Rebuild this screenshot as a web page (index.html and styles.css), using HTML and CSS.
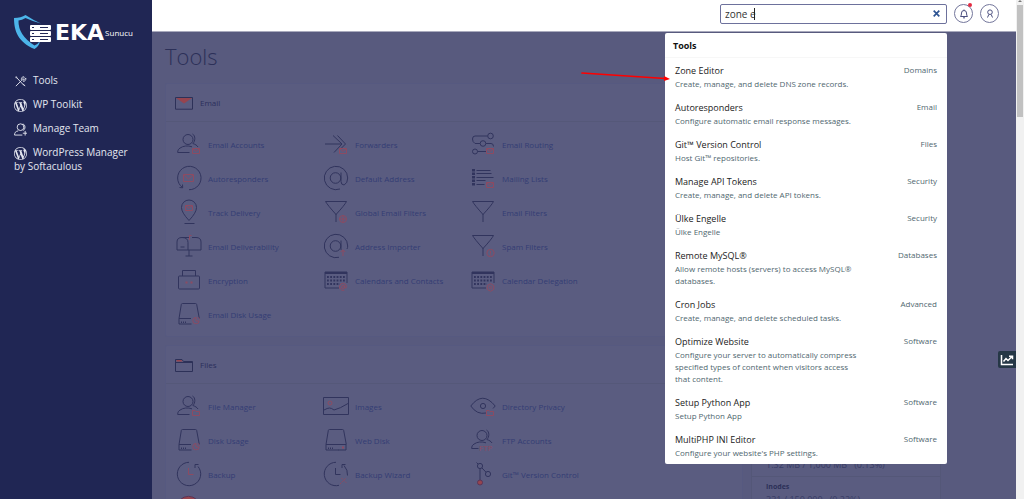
FILE: index.html
```html
<!DOCTYPE html>
<html lang="en">
<head>
<meta charset="utf-8">
<title>Tools</title>
<link rel="stylesheet" href="styles.css">
</head>
<body>
<svg class="sprite" aria-hidden="true">
  <symbol id="mail-badge" viewBox="0 0 8 6"><path d="M.5.5h7v5h-7zM.8.8 4 3.400 7.200.8"/></symbol>
  <symbol id="folder-badge" viewBox="0 0 8 6"><path d="M.5.5h2.500l.8 1h3.700v4h-7z"/></symbol>
  <symbol id="person" viewBox="0 0 26 26"><circle cx="12" cy="8.500" r="5"/><path d="M16.500 3c3 1.500 3 7 .4 9.500 2.500 1 4 1.700 5.100 3.500M16 15.800c-4-1.500-9-1-12 1.300-1.500 1-2.300 2-2.300 4.400H13.500"/></symbol>
  <symbol id="disk" viewBox="0 0 26 26"><path d="M6.500 2.500h13q1 0 1.200 1l2.600 14M3 17.500 5.300 3.500q.2-1 1.200-1M3 17.500V23H15.500M3 17.500H15M5.500 22v-1.500M7.500 22v-1.500M9.500 22v-1.500"/></symbol>
  <symbol id="pie-badge" viewBox="0 0 8 8"><path d="M4 1A3.200 3.200 0 1 0 7.200 4.500H4zM5.500.7q1.700.7 1.800 2.300"/></symbol>
  <symbol id="filter" viewBox="0 0 26 26"><path d="M2.500 2.500h21q-1.700 3.500-10.500 13Q4.500 6 2.500 2.500zM13 15v8"/></symbol>
  <symbol id="calendar" viewBox="0 0 26 26"><path d="M16 21H2V5h22v11"/><path d="M2 6h22" stroke-width="2"/><path d="M4 10h18M4 13.500h18M4 17h13" stroke-width="1.800" stroke-dasharray="1.800 1.400"/></symbol>
  <symbol id="wp" viewBox="0 0 20 20"><path d="M20 10c0-5.510-4.490-10-10-10C4.480 0 0 4.490 0 10c0 5.520 4.480 10 10 10 5.510 0 10-4.480 10-10zM7.780 15.370L4.370 6.220c.55-.02 1.170-.08 1.170-.08.5-.06.44-1.130-.06-1.110 0 0-1.450.11-2.370.11-.18 0-.37 0-.58-.01C4.120 2.690 6.870 1.110 10 1.110c2.330 0 4.450.87 6.050 2.340-.68-.11-1.650.39-1.650 1.580 0 .74.45 1.360.9 2.100.35.61.55 1.360.55 2.460 0 1.490-1.400 5-1.400 5l-3.030-8.370c.54-.02.82-.17.82-.17.5-.05.44-1.250-.06-1.220 0 0-1.440.12-2.380.12-.87 0-2.330-.12-2.330-.12-.5-.03-.56 1.200-.06 1.220l.92.08 1.260 3.410zM17.410 10c.24-.64.74-1.870.43-4.250.7 1.290 1.050 2.710 1.050 4.250 0 3.290-1.730 6.240-4.400 7.780.97-2.590 1.940-5.200 2.920-7.780zM6.100 18.090C3.120 16.650 1.110 13.530 1.110 10c0-1.300.23-2.480.72-3.590C3.250 10.300 4.670 14.200 6.100 18.090zm4.030-6.630l2.580 6.980c-.86.29-1.760.45-2.710.45-.79 0-1.570-.11-2.290-.33.81-2.380 1.620-4.740 2.420-7.100z"/></symbol>
</svg>
<div class="app">
  <aside class="sidebar">
    <a class="brand" href="#">
      <svg class="shield" viewBox="0 0 38 36" aria-hidden="true">
        <path fill="#4cb5ea" d="M0 3Q7 3 11.500 0 19 5 27 8.500 19 6.500 11.500 3 8 5 4.500 5.500 4 20 20.500 30.500 24 29 26 26 25 31.500 20.500 34C4 27 0 16 0 3z"/>
        <g fill="#fff"><rect x="16" y="10" width="21" height="5" rx="1"/><rect x="16" y="16" width="21" height="5" rx="1"/><rect x="16" y="22" width="21" height="5" rx="1"/></g>
        <path stroke="#232957" d="M18 12.500h2M26 12.500h8M18 18.500h2M26 18.500h8M18 24.500h2M26 24.500h8"/>
      </svg>
      <span class="brand-name">EKA</span><span class="brand-sub">Sunucu</span>
    </a>
    <nav class="nav">
      <a href="#"><svg class="nav-icon line" viewBox="0 0 14 14"><path d="m3 3 8 8.500M2 2l1.500.5M2 2l.5 1.500M12 12l-2.200-2.500M2 12l6-6M11.500 2 9.500 4v1.200h1.200l2-2c.5 2-1 4-3 3.500M9 6.500C7 5 8 2 10.500 1.700" /></svg>Tools</a>
      <a href="#"><svg class="nav-icon solid" viewBox="0 0 20 20"><use href="#wp"/></svg>WP Toolkit</a>
      <a href="#"><svg class="nav-icon line" viewBox="0 0 14 14"><circle cx="7" cy="4.500" r="3.600"/><path d="M9.500 1c3 1 3 5.500.5 7M4.500 8.500C1.500 9 .6 10.500.6 13H9M12 8.500v5M9.500 11h4.500"/></svg>Manage Team</a>
      <a href="#"><svg class="nav-icon solid" viewBox="0 0 20 20"><use href="#wp"/></svg>WordPress Manager by Softaculous</a>
    </nav>
  </aside>

  <div class="page">
    <header class="topbar">
      <form class="search" role="search">
        <label class="field"><span class="hidden">Search Tools</span><input type="text" value="zone e"><span class="caret"></span></label>
        <button class="clear" type="button" aria-label="Clear"><svg viewBox="0 0 8 8"><path d="m1.500 1.500 5 5m0-5-5 5"/></svg></button>
        <section class="results">
          <h2>Tools</h2>
          <a href="#"><strong>Zone Editor</strong><em>Domains</em><span>Create, manage, and delete DNS zone records.</span></a>
          <a href="#"><strong>Autoresponders</strong><em>Email</em><span>Configure automatic email response messages.</span></a>
          <a href="#"><strong>Git™ Version Control</strong><em>Files</em><span>Host Git™ repositories.</span></a>
          <a href="#"><strong>Manage API Tokens</strong><em>Security</em><span>Create, manage, and delete API tokens.</span></a>
          <a href="#"><strong>Ülke Engelle</strong><em>Security</em><span>Ülke Engelle</span></a>
          <a href="#"><strong>Remote MySQL®</strong><em>Databases</em><span>Allow remote hosts (servers) to access MySQL® databases.</span></a>
          <a href="#"><strong>Cron Jobs</strong><em>Advanced</em><span>Create, manage, and delete scheduled tasks.</span></a>
          <a href="#"><strong>Optimize Website</strong><em>Software</em><span>Configure your server to automatically compress specified types of content when visitors access that content.</span></a>
          <a href="#"><strong>Setup Python App</strong><em>Software</em><span>Setup Python App</span></a>
          <a href="#"><strong>MultiPHP INI Editor</strong><em>Software</em><span>Configure your website's PHP settings.</span></a>
          <svg class="pointer" viewBox="0 0 90 12" aria-hidden="true"><path d="M1 3 84 8.500" stroke="#f00" stroke-width="1.700" stroke-linecap="round"/><path d="m83 6 6 3-6 2z" fill="#f00"/></svg>
        </section>
      </form>
      <button class="round" type="button" aria-label="Notifications"><svg viewBox="0 0 12 12"><path d="M2.500 8.500q1-1 1-3.500 0-2.500 2.500-2.500T8.500 5q0 2.500 1 3.500zM5 9.500q1 1.300 2 0M6 1.500v1"/></svg><i class="dot"></i></button>
      <button class="round" type="button" aria-label="Account"><svg viewBox="0 0 12 12"><circle cx="6" cy="4.200" r="2.300"/><path d="M4.800 6.500 3.500 9.500M7.200 6.500l1.300 3"/></svg></button>
    </header>

    <main class="content">
      <h1>Tools</h1>
      <div class="columns">
        <div class="panels">
          <section class="panel">
            <h2><svg class="head-icon" viewBox="0 0 18 14"><path d="M.5 1.500h17v11.700H.5z"/><path class="fill" d="M1 2h16L9 7.500z"/></svg>Email</h2>
            <div class="tools">
              <a href="#"><svg viewBox="0 0 26 26"><use href="#person"/><use class="red" href="#mail-badge" x="16" y="17" width="8" height="6"/></svg>Email Accounts</a>
              <a href="#"><svg viewBox="0 0 26 26"><path d="M2 13h17M10 4.500l9 8.500-8 8.500M14.500 4.500l8 8.500-4 4"/><use class="red" href="#mail-badge" x="16" y="17" width="8" height="6"/></svg>Forwarders</a>
              <a href="#"><svg viewBox="0 0 26 26"><circle cx="20.500" cy="5" r="2.800"/><circle cx="13" cy="12.500" r="2.800"/><circle cx="5" cy="20.500" r="2.500"/><path d="M17.500 5H5Q2.500 5 2.500 8t2.500 4.500h5M16 12.500h5q2.500 0 2.500 3M7.500 20.500H16"/><use class="red" href="#mail-badge" x="16" y="17" width="8" height="6"/></svg>Email Routing</a>
              <a href="#"><svg viewBox="0 0 26 26"><path d="M6.500 22.500A11.700 11.700 0 1 1 13 24.700M3.500 22.500l3.200.3-.2-3.300"/><path class="red" d="M7.500 9.500h10v7h-10zM8 10l4.500 4L17 10"/></svg>Autoresponders</a>
              <a href="#"><svg viewBox="0 0 26 26"><circle cx="12.500" cy="13" r="5.300"/><path d="M18 7.500v9q0 3.500 3.200 3.500 3.500-2 3.500-7A11.700 11.700 0 1 0 17 24"/></svg>Default Address</a>
              <a href="#"><svg viewBox="0 0 26 26"><path d="M6.500 5.500h14M6.500 8.500h15M6.500 12.500h17M6.500 15.500h9M6.500 19.500h8"/><path d="M3.500 4v17" stroke-width="3" stroke-dasharray="2.500 1"/><use class="red" href="#mail-badge" x="16" y="17" width="8" height="6"/></svg>Mailing Lists</a>
              <a href="#"><svg viewBox="0 0 26 26"><path d="M13 21.500Q5.500 13.500 5.500 8.500a7.500 7.500 0 0 1 15 0q0 5-7.500 13zM8.500 24.500h10"/><use class="red" href="#mail-badge" x="9" y="6" width="8" height="6"/></svg>Track Delivery</a>
              <a href="#"><svg viewBox="0 0 26 26"><use href="#filter"/><g class="red"><circle cx="20" cy="20" r="3.500"/><path d="M16.500 20h7M20 16.500v7"/></g></svg>Global Email Filters</a>
              <a href="#"><svg viewBox="0 0 26 26"><use href="#filter"/></svg>Email Filters</a>
              <a href="#"><svg viewBox="0 0 26 26"><path d="M12 17H1V9q0-4.500 5-4.500 6 0 6 5V17h13V9q0-4.500-5-4.500h-4M6 4.500h7M13 17v6M9.500 23h7M4.500 14h4"/><path class="red" d="M13.500 7V2.500h2"/></svg>Email Deliverability</a>
              <a href="#"><svg viewBox="0 0 26 26"><circle cx="12.500" cy="13" r="5.300"/><path d="M18 7.500V17M24 16q.7-1.500.7-3A11.700 11.700 0 1 0 16 24.300"/><path class="red" d="M20 23v-6M17.800 19l2.200-2.200 2.200 2.200"/></svg>Address Importer</a>
              <a href="#"><svg viewBox="0 0 26 26"><use href="#filter"/><g class="red"><circle cx="20.500" cy="20" r="3.700"/><path d="M20.500 18v2.500M20.500 21.300v1"/></g></svg>Spam Filters</a>
              <a href="#"><svg viewBox="0 0 26 26"><rect x="2.500" y="9" width="21" height="13" rx="1"/><path d="M6.500 9V3.500h13V9"/><path class="red" stroke-width="2" d="M9.500 15.500h2M14.500 15.500h2"/></svg>Encryption</a>
              <a href="#"><svg viewBox="0 0 26 26"><use href="#calendar"/><g class="red"><circle cx="20" cy="20" r="1.500"/><path d="M21.500 18.500v2.500q2 .5 2-1.500a3.500 3.500 0 1 0-2 3.500"/></g></svg>Calendars and Contacts</a>
              <a href="#"><svg viewBox="0 0 26 26"><use href="#calendar"/><g class="red"><circle cx="20.500" cy="20.500" r="1.200"/><path d="m20.500 16.700 3.300 1.900v3.800l-3.300 1.900-3.300-1.900v-3.800z"/></g></svg>Calendar Delegation</a>
              <a href="#"><svg viewBox="0 0 26 26"><use href="#disk"/><use class="red" href="#pie-badge" x="16" y="15.500" width="8" height="8"/></svg>Email Disk Usage</a>
            </div>
          </section>
          <section class="panel">
            <h2><svg class="head-icon" viewBox="0 0 18 14"><path d="M.5 13.500v-12H7l1.500 2h9v10zM.5 4.500h17"/><path class="fill" d="M1.500 2h5l1 1.500h-6z"/></svg>Files</h2>
            <div class="tools">
              <a href="#"><svg viewBox="0 0 26 26"><use href="#person"/><use class="red" href="#folder-badge" x="16" y="17" width="8" height="6"/></svg>File Manager</a>
              <a href="#"><svg viewBox="0 0 26 26"><path d="M.5 4.500h25v17H.5zM1 17q3.500-2 5.500-2t4.500 2q6-1.500 14-6.500"/><circle class="red" cx="7" cy="10" r="2"/></svg>Images</a>
              <a href="#"><svg viewBox="0 0 26 26"><path d="M16 20Q7 22 .8 13q11.700-15.500 24.400 0L23 15.500"/><circle cx="13" cy="13" r="2.600"/><use class="red" href="#folder-badge" x="16" y="17" width="8" height="6"/></svg>Directory Privacy</a>
              <a href="#"><svg viewBox="0 0 26 26"><use href="#disk"/><use class="red" href="#pie-badge" x="16" y="15.500" width="8" height="8"/></svg>Disk Usage</a>
              <a href="#"><svg viewBox="0 0 26 26"><use href="#disk"/><path d="M15 17.500h8V23h-8"/><path class="red" stroke-width="2" d="M19 20.500h2"/></svg>Web Disk</a>
              <a href="#"><svg viewBox="0 0 26 26"><circle cx="12" cy="8.500" r="5"/><path d="M16.500 3c3 1.500 3 7 .4 9.500 2.500 1 4 1.700 5.100 3.500M16 15.800c-4-1.500-9-1-12 1.300-1.500 1-2.300 2-2.300 4.400H8.500"/><text class="ftp" x="9" y="24">FTP</text></svg>FTP Accounts</a>
              <a href="#"><svg viewBox="0 0 26 26"><path d="M13 1.300A11.700 11.700 0 1 0 22 5.500M19 7V3.500h3.500"/><path class="red" d="M12.500 7v6.500h5"/></svg>Backup</a>
              <a href="#"><svg viewBox="0 0 26 26"><path d="M13 1.300A11.700 11.700 0 1 0 16 24.300M24.500 14.500Q25 9 21 4.500M19 7V3.500h3.500M12.500 7v6.500h5"/><path class="red" stroke-dasharray="2 1" d="m17 23 6-6M18.500 17l5 5"/></svg>Backup Wizard</a>
              <a href="#"><svg viewBox="0 0 26 26"><circle cx="10" cy="5" r="2.600"/><circle cx="18" cy="13" r="2.600"/><path d="M10 7.500V19M12 7l4 4.200M6.500 1.500l1.500 1.500"/><circle class="fill" cx="10" cy="21.500" r="2.500"/></svg>Git™ Version Control</a>
              <a href="#" aria-label="Git"><svg viewBox="0 0 26 26"><circle class="fill" cx="12.500" cy="13" r="11.700"/></svg></a>
            </div>
          </section>
        </div>
        <aside class="stats">
          <div class="stat"><span>1.32 MB / 1,000 MB &nbsp; (0.13%)</span></div>
          <div class="stat"><b>Inodes</b><span>331 / 150,000 &nbsp; (0.22%)</span></div>
        </aside>
      </div>
    </main>
    <button class="chart" type="button" aria-label="Analytics"><svg viewBox="0 0 14 12"><path d="M1.500 1v9.500H13M3.500 7.500l2.500-3L8 6.500l4-4M9 2.200h3.500v3"/></svg></button>
  </div>
  <div class="scrollbar" aria-hidden="true"><i class="up"></i><i class="thumb"></i><i class="down"></i></div>
</div>
</body>
</html>
```
FILE: styles.css
```css
* { box-sizing: border-box; }
body { margin: 0; font-family: "Open Sans", "Noto Sans", sans-serif; font-size: 8px; }
a { color: inherit; text-decoration: none; }
h1, h2 { margin: 0; font-weight: 400; }
svg { display: block; flex: none; fill: none; }
button { padding: 0; font: inherit; background: none; border: 0; }
.sprite { position: absolute; width: 0; height: 0; }
.hidden { position: absolute; width: 1px; height: 1px; overflow: hidden; clip-path: inset(50%); }

.app { display: grid; grid-template-columns: 152px 1fr 8px; height: 100vh; overflow: hidden; background: #585a7e; }

.sidebar { padding: 15px 14px; color: #e4e6f0; background: #202654; }
.brand { display: flex; align-items: center; color: #fff; }
.shield { width: 38px; height: 36px; }
.brand-name { margin: 0 1px 0 3px; font: 700 22px/36px "DejaVu Sans", sans-serif; }
.brand-sub { font-size: 8px; line-height: 34px; }
.nav { display: grid; gap: 10px; margin-top: 22px; font-size: 10px; line-height: 14px; }
.nav-icon { display: inline-block; width: 13px; height: 13px; margin: -1px 6px -1px 0; vertical-align: middle; }
.line { stroke: currentColor; stroke-width: 1; }
.solid { fill: currentColor; }

.page { position: relative; min-width: 0; }
.topbar { display: flex; align-items: center; justify-content: flex-end; gap: 7px; height: 32px; padding: 0 17px 4px 0; background: #fff; border-bottom: 1px solid #a9aabd; }
.search { position: relative; display: flex; align-items: center; width: 227px; height: 20px; border: 1px solid #6d719c; border-radius: 2px; }
.field { position: relative; flex: 1; }
.field input { display: block; width: 100%; height: 18px; padding: 0 4px; font: 10px/18px "Open Sans", sans-serif; color: #333; background: none; border: 0; outline: 0; }
.caret { position: absolute; top: 3px; left: 33px; width: 1px; height: 12px; background: #222; }
.clear { margin-right: 5px; }
.clear svg { width: 9px; height: 9px; stroke: #2d5493; stroke-width: 1.500; }
.round { position: relative; display: grid; place-items: center; width: 19px; height: 19px; border: 1px solid #74779c; border-radius: 50%; }
.round svg { width: 12px; height: 12px; stroke: #4c5080; }
.dot { position: absolute; top: -2px; right: 0; width: 4px; height: 4px; background: #e32b41; border-radius: 50%; }

.results { position: absolute; z-index: 2; top: 28px; right: -1px; width: 282px; color: #222; background: #fff; border-radius: 2px; }
.results h2 { padding: 6px 8px 4px; margin-bottom: 1px; font-size: 9px; line-height: 14px; font-weight: 700; color: #111; border-bottom: 1px solid #f7f7f7; }
.results a { display: grid; grid-template-columns: 1fr auto; row-gap: 1px; padding: 5px 10px 6px; }
.results strong { font-size: 9px; line-height: 13px; font-weight: 400; }
.results em { font-style: normal; line-height: 12px; color: #50676f; }
.results span { grid-column: 1 / -1; max-width: 190px; line-height: 12px; color: #50676f; }
.results a:last-of-type { padding-bottom: 5px; }
.pointer { position: absolute; top: 37px; left: -84px; width: 90px; height: 12px; }

.content { padding: 9px 0 0 13px; color: #2c3058; }
h1 { font-size: 22px; line-height: 30px; font-weight: 300; }
.columns { display: grid; grid-template-columns: 1fr 190px; gap: 8px; padding: 12px 75px 0 0; }
.panels { display: grid; gap: 8px; }
.panel { background: #5a5c80; border: 1px solid #565980; border-radius: 2px; }
.panel h2 { display: flex; align-items: center; gap: 7px; height: 38px; padding-left: 9px; font-size: 8px; color: #2b2f5c; border-bottom: 1px solid #555879; }
.head-icon { width: 18px; height: 14px; stroke: #2d3158; }
.fill { fill: #96444f; stroke: #5a3558; }
.head-icon .fill { stroke: none; }
.tools { display: grid; grid-template-columns: repeat(3, 147px); grid-auto-rows: 34px; padding: 5px 0 5px 10px; color: #343c74; }
.tools a { display: flex; align-items: center; gap: 6px; white-space: nowrap; }
.tools svg { width: 26px; height: 26px; stroke: #31345d; }
.tools .red { stroke: #8c4b62; }
.ftp { font-size: 8px; fill: #8c4b62; stroke: none; }
.stats { align-self: start; margin-top: 370px; background: #5a5c80; border: 1px solid #545778; }
.stat { display: grid; padding: 4px 14px; line-height: 12px; border-bottom: 1px solid #545778; }
.stat b { font-size: 7px; }
.stat span { font-size: 9px; line-height: 14px; color: #393c66; }

.chart { position: absolute; top: 351px; right: 0; display: grid; place-items: center; width: 18px; height: 17px; background: #253746; border-radius: 2px 0 0 2px; }
.chart svg { width: 14px; height: 12px; stroke: #fff; stroke-width: 1.500; }

.scrollbar { display: grid; grid-template-rows: 5px 112px 1fr 5px; justify-items: center; background: #f1f1f1; }
.thumb { width: 6px; background: #c1c1c1; }
.up, .down { width: 4px; height: 2px; background: #777; clip-path: polygon(50% 0, 100% 100%, 0 100%); }
.down { grid-row: 4; clip-path: polygon(0 0, 100% 0, 50% 100%); }
```
